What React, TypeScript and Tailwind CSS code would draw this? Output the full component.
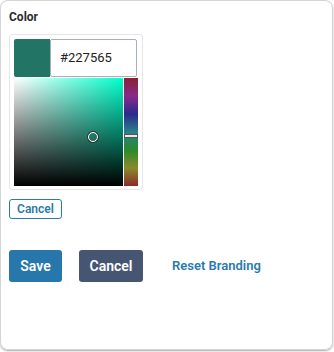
import { FC } from "react";

const ColorPicker: FC = () => {
  return (
    <div className="w-[134px] h-[156px] border border-[#e6e6e6] rounded-[3px] bg-white pt-[4px] px-[4px] pb-[3px] flex flex-col">
      <div className="flex h-[38px]">
        <div className="w-[36px] h-full bg-[#227565] rounded-l-[2px]" />
        <div className="w-[87px] h-full border border-[#a7b0ba] rounded-[2px] bg-white flex items-center pl-[9px] text-[13px] text-[#222]">
          #227565
        </div>
      </div>
      <div className="flex h-[109px] mt-[1px]">
        <div className="relative w-[109px] h-full bg-[#00ffcc]">
          <div className="absolute inset-0 bg-gradient-to-r from-white to-transparent" />
          <div className="absolute inset-0 bg-gradient-to-t from-black to-transparent" />
          <div className="absolute left-[74px] top-[54px] w-[10px] h-[10px] rounded-full border-[1.5px] border-white shadow-[0_0_0_1px_#333]" />
        </div>
        <div className="relative w-[14px] h-full ml-[1px] bg-[linear-gradient(to_bottom,#8a2232,#8a2a8a,#2a2a8c,#2a7f8a,#2a8a2a,#8a8a2a,#8c2a2a)]">
          <div className="absolute left-0 right-0 top-[56px] h-[4px] bg-[#e8e8e8] border border-[#555]" />
        </div>
      </div>
    </div>
  );
};

const App: FC = () => {
  return (
    <div className="w-[334px] h-[352px] bg-white font-['Roboto',sans-serif]">
      <div className="w-[333px] h-[350px] border border-[#d4d4d4] rounded-[8px] shadow-[0_1px_2px_rgba(0,0,0,0.35)] pl-[8px] pt-[8px]">
        <h1 className="text-[12px] font-bold text-[#2d2d2d] leading-[16px]">
          Color
        </h1>
        <div className="mt-[9px]">
          <ColorPicker />
        </div>
        <button className="mt-[9px] w-[53px] h-[20px] border-[1.5px] border-[#2a7bab] rounded-[3px] text-[12px] font-semibold text-[#2a7bab] leading-none">
          Cancel
        </button>
        <div className="flex items-center mt-[30px]">
          <button className="w-[53px] h-[32px] bg-[#2777ac] rounded-[3px] text-white text-[14px] font-semibold">
            Save
          </button>
          <button className="ml-[17px] w-[64px] h-[32px] bg-[#465672] rounded-[3px] text-white text-[14px] font-semibold">
            Cancel
          </button>
          <button className="ml-[29px] text-[#2a7ab0] text-[13px] font-semibold">
            Reset Branding
          </button>
        </div>
      </div>
    </div>
  );
};

export default App;
